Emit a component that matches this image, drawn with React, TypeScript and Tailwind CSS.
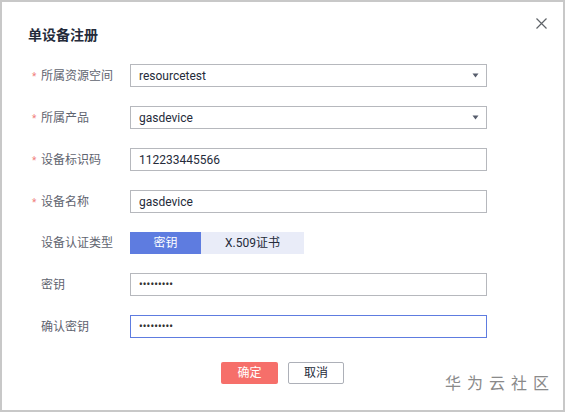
import React from "react";

interface Field {
  label: string;
  required?: boolean;
  value: string;
  kind: "select" | "text" | "password";
  focused?: boolean;
}

const topFields: Field[] = [
  { label: "所属资源空间", required: true, value: "resourcetest", kind: "select" },
  { label: "所属产品", required: true, value: "gasdevice", kind: "select" },
  { label: "设备标识码", required: true, value: "112233445566", kind: "text" },
  { label: "设备名称", required: true, value: "gasdevice", kind: "text" },
];

const secretFields: Field[] = [
  { label: "密钥", value: "•••••••••", kind: "password" },
  { label: "确认密钥", value: "•••••••••", kind: "password", focused: true },
];

function Label({ text, required }: { text: string; required?: boolean }) {
  return (
    <div className="flex w-[102px] shrink-0 items-center pl-[4px] text-[12px] text-[#5f6470]">
      <span className="w-[9px] pt-[2px] text-[10px] text-[#f0807b]">{required ? "*" : ""}</span>
      <span>{text}</span>
    </div>
  );
}

function Caret() {
  return (
    <svg width="7" height="5" viewBox="0 0 7 5" className="mr-[7px]">
      <path d="M0.5 0.5 L6.5 0.5 L3.5 4.5 Z" fill="#575d6c" />
    </svg>
  );
}

function FieldRow({ field }: { field: Field }) {
  const border = field.focused ? "border-[#5e7ce0]" : "border-[#b6b8bd]";
  return (
    <div className="flex h-[23px] items-center">
      <Label text={field.label} required={field.required} />
      <div
        className={`flex h-[23px] w-[357px] items-center justify-between border bg-white pl-[8px] ${border}`}
      >
        {field.kind === "password" ? (
          <span className="text-[10px] font-bold tracking-[0.2px] text-[#333]">{field.value}</span>
        ) : (
          <span className="text-[12px] text-[#252b3a]">{field.value}</span>
        )}
        {field.kind === "select" && <Caret />}
      </div>
    </div>
  );
}

export default function App() {
  return (
    <div
      className="relative h-[412px] w-[565px] border-2 border-[#c8c8c8] bg-white"
      style={{ fontFamily: "Roboto, 'Noto Sans CJK SC', sans-serif" }}
    >
      <button className="absolute right-[16px] top-[15px] flex h-[12px] w-[12px] items-center justify-center">
        <svg width="11" height="11" viewBox="0 0 11 11">
          <path d="M0.5 0.5 L10.5 10.5 M10.5 0.5 L0.5 10.5" stroke="#5f6368" strokeWidth="1.2" />
        </svg>
      </button>

      <div className="flex flex-col pl-[26px] pt-[23px]">
        <h2 className="h-[20px] text-[14px] font-bold leading-[20px] text-[#252b3a]">单设备注册</h2>

        <div className="mt-[19px] flex flex-col gap-[19px]">
          {topFields.map((f) => (
            <FieldRow key={f.label} field={f} />
          ))}

          <div className="flex h-[22px] items-center">
            <Label text="设备认证类型" />
            <div className="flex h-[22px] text-[12px]">
              <div className="flex w-[71px] items-center justify-center bg-[#5e7ce0] text-white">密钥</div>
              <div className="flex w-[103px] items-center justify-center bg-[#e9ecf8] text-[#252b3a]">
                X.509证书
              </div>
            </div>
          </div>

          {secretFields.map((f) => (
            <FieldRow key={f.label} field={f} />
          ))}
        </div>

        <div className="mt-[24px] flex justify-center gap-[10px] pr-[26px]">
          <button className="h-[22px] w-[57px] rounded-[2px] bg-[#f66f6a] text-[12px] text-white">确定</button>
          <button className="h-[22px] w-[56px] rounded-[2px] border border-[#adb0b8] bg-white text-[12px] text-[#252b3a]">
            取消
          </button>
        </div>
      </div>

      <div className="absolute bottom-[14px] right-[8px] text-[16px] tracking-[6px] text-[#8a8a8a]">华为云社区</div>
    </div>
  );
}
